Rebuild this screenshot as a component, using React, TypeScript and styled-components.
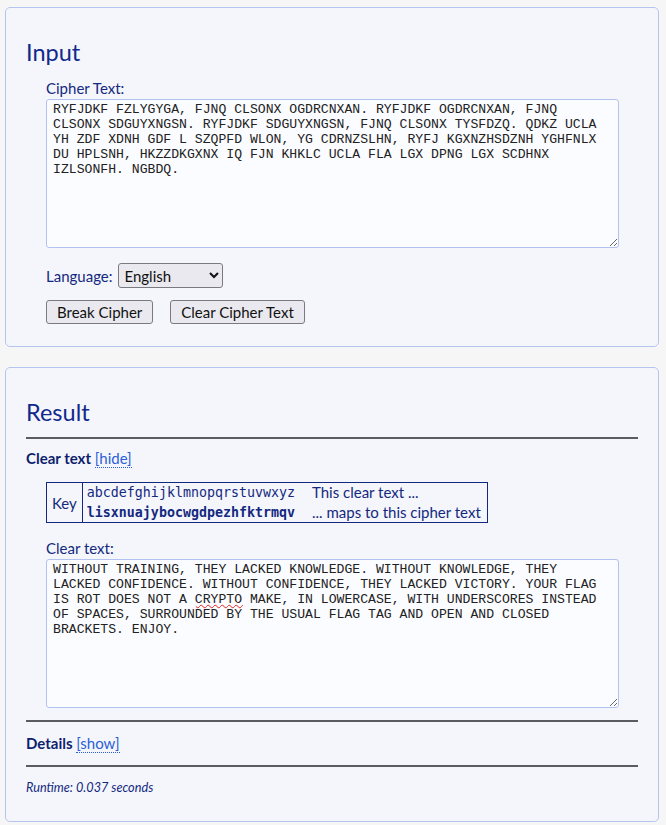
import React from "react";
import styled, { createGlobalStyle } from "styled-components";

const Global = createGlobalStyle`
  html, body { margin: 0; padding: 0; }
  body {
    background: #f6f6f7;
    font-family: "Lato", "Noto Sans", sans-serif;
    color: #13297f;
  }
`;

const Page = styled.div`
  padding: 7px 7px 2px 5px;
  display: flex;
  flex-direction: column;
  gap: 20px;
`;

const Panel = styled.section<{ $bottom?: number }>`
  border: 1px solid #b6c5ef;
  border-radius: 5px;
  background: #f5f6fb;
  padding: 29px 20px ${(p) => p.$bottom ?? 22}px 20px;
`;

const Heading = styled.h2<{ $gap?: number }>`
  margin: 0 0 ${(p) => p.$gap ?? 11}px 0;
  font-weight: 400;
  font-size: 23.5px;
  line-height: 30px;
  color: #12288c;
`;

const Field = styled.div`
  padding-left: 20px;
  display: flex;
  flex-direction: column;
`;

const Label = styled.label`
  font-size: 15px;
  line-height: 20px;
  color: #13297f;
`;

const BoxWrap = styled.div`
  position: relative;
  width: 573px;
  height: 150px;
  flex: none;
`;

const TextBox = styled.textarea`
  display: block;
  box-sizing: border-box;
  width: 573px;
  height: 149px;
  margin: 1px 0 0 0;
  padding: 2px 10px 2px 6px;
  border: 1px solid #b3c2ee;
  border-radius: 3px;
  background: #fbfcff;
  font-family: "Liberation Mono", "Courier New", monospace;
  font-size: 13.13px;
  line-height: 15px;
  color: #222;
  resize: both;
  outline: none;
`;

const SpellMark = styled.div`
  position: absolute;
  left: 8px;
  top: 33px;
  font-family: "Liberation Mono", "Courier New", monospace;
  font-size: 13.13px;
  line-height: 15px;
  color: transparent;
  white-space: pre;
  pointer-events: none;
`;

const Squiggle = styled.span`
  text-decoration: underline wavy #e0241f;
  text-decoration-thickness: 1px;
  text-underline-offset: 2px;
`;

const Row = styled.div`
  display: flex;
  align-items: center;
  gap: 5px;
  margin-top: 15px;
`;

const Select = styled.select`
  box-sizing: border-box;
  width: 105px;
  height: 25px;
  font-family: "Lato", "Noto Sans", sans-serif;
  font-size: 15px;
  color: #111;
  background: #e9e9ef;
  border: 1px solid #7a7a80;
  border-radius: 3px;
  padding: 0 2px;
`;

const Buttons = styled.div`
  display: flex;
  gap: 17px;
  margin-top: 12px;
`;

const Button = styled.button`
  box-sizing: border-box;
  height: 24px;
  padding: 0 10px;
  font-family: "Lato", "Noto Sans", sans-serif;
  font-size: 15px;
  color: #111;
  background: #e9e9ef;
  border: 1px solid #7a7a80;
  border-radius: 3px;
`;

const Rule = styled.hr<{ $top?: number }>`
  margin: ${(p) => p.$top ?? 0}px 0 0 0;
  border: none;
  border-top: 2px solid #5c5c60;
`;

const SubHead = styled.div<{ $space?: string }>`
  font-size: 15px;
  line-height: 20px;
  font-weight: 700;
  color: #0e1f6e;
  margin: ${(p) => p.$space || "0"};
`;

const Toggle = styled.a`
  font-weight: 400;
  color: #2b5fd6;
  text-decoration: none;
  border-bottom: 1px dotted #2b5fd6;
`;

const KeyTable = styled.table`
  border-collapse: collapse;
  border: 1px solid #13297f;
  margin: 14px 0 15px 20px;
  color: #13297f;
`;

const KeyHead = styled.td`
  border-right: 1px solid #13297f;
  padding: 0 5px;
  font-size: 15px;
`;

const KeyLetters = styled.td<{ $bold?: boolean }>`
  font-family: "DejaVu Sans Mono", monospace;
  font-size: 13.3px;
  font-weight: ${(p) => (p.$bold ? 700 : 400)};
  padding: 0 6px 0 4px;
  line-height: 19.5px;
  white-space: nowrap;
`;

const KeyNote = styled.td`
  padding: 0 6px 0 11px;
  font-size: 15px;
  line-height: 19.5px;
  white-space: nowrap;
`;

const Runtime = styled.div`
  font-style: italic;
  font-size: 12.7px;
  margin-top: 12px;
  color: #13297f;
`;

const cipher =
  "RYFJDKF FZLYGYGA, FJNQ CLSONX OGDRCNXAN. RYFJDKF OGDRCNXAN, FJNQ CLSONX SDGUYXNGSN. RYFJDKF SDGUYXNGSN, FJNQ CLSONX TYSFDZQ. QDKZ UCLA YH ZDF XDNH GDF L SZQPFD WLON, YG CDRNZSLHN, RYFJ KGXNZHSDZNH YGHFNLX DU HPLSNH, HKZZDKGXNX IQ FJN KHKLC UCLA FLA LGX DPNG LGX SCDHNX IZLSONFH. NGBDQ.";

const clear =
  "WITHOUT TRAINING, THEY LACKED KNOWLEDGE. WITHOUT KNOWLEDGE, THEY LACKED CONFIDENCE. WITHOUT CONFIDENCE, THEY LACKED VICTORY. YOUR FLAG IS ROT DOES NOT A CRYPTO MAKE, IN LOWERCASE, WITH UNDERSCORES INSTEAD OF SPACES, SURROUNDED BY THE USUAL FLAG TAG AND OPEN AND CLOSED BRACKETS. ENJOY.";

export default function App() {
  return (
    <>
      <Global />
      <Page>
        <Panel $bottom={22}>
          <Heading $gap={11}>Input</Heading>
          <Field>
            <Label>Cipher Text:</Label>
            <TextBox defaultValue={cipher} spellCheck={false} />
            <Row>
              <Label>Language:</Label>
              <Select defaultValue="English">
                <option>English</option>
              </Select>
            </Row>
            <Buttons>
              <Button>Break Cipher</Button>
              <Button>Clear Cipher Text</Button>
            </Buttons>
          </Field>
        </Panel>
        <Panel $bottom={26}>
          <Heading $gap={10}>Result</Heading>
          <Rule />
          <SubHead $space="9px 0 0 0">
            Clear text <Toggle>[hide]</Toggle>
          </SubHead>
          <KeyTable>
            <tbody>
              <tr>
                <KeyHead rowSpan={2}>Key</KeyHead>
                <KeyLetters>abcdefghijklmnopqrstuvwxyz</KeyLetters>
                <KeyNote>This clear text ...</KeyNote>
              </tr>
              <tr>
                <KeyLetters $bold>lisxnuajybocwgdpezhfktrmqv</KeyLetters>
                <KeyNote>... maps to this cipher text</KeyNote>
              </tr>
            </tbody>
          </KeyTable>
          <Field>
            <Label>Clear text:</Label>
            <BoxWrap>
              <TextBox defaultValue={clear} spellCheck={false} />
              <SpellMark aria-hidden>
                {"IS ROT DOES NOT A "}
                <Squiggle>CRYPTO</Squiggle>
              </SpellMark>
            </BoxWrap>
          </Field>
          <Rule $top={12} />
          <SubHead $space="11px 0 12px 0">
            Details <Toggle>[show]</Toggle>
          </SubHead>
          <Rule />
          <Runtime>Runtime: 0.037 seconds</Runtime>
        </Panel>
      </Page>
    </>
  );
}
